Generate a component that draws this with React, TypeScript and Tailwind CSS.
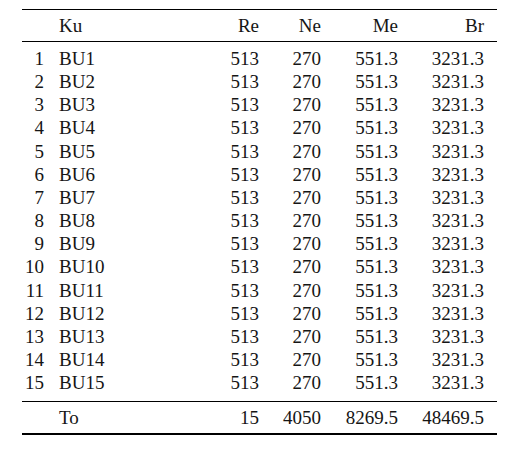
const rows = Array.from({ length: 15 }, (_, i) => ({
  idx: i + 1,
  name: `BU${i + 1}`,
  re: "513",
  ne: "270",
  me: "551.3",
  br: "3231.3",
}));

const GRID = "grid grid-cols-[22px_165px_50px_62px_77px_86px] pr-[13px]";

export default function App() {
  return (
    <div className="w-[513px] h-[450px] bg-white text-[#151515] font-['Liberation_Serif'] text-[19px]">
      <div className="ml-[22px] pt-[9px] w-[475px]">
        <div className="border-t-[1.5px] border-black" />
        <div className={`${GRID} leading-[31px]`}>
          <span />
          <span className="pl-[15px]">Ku</span>
          <span className="text-right">Re</span>
          <span className="text-right">Ne</span>
          <span className="text-right">Me</span>
          <span className="text-right">Br</span>
        </div>
        <div className="border-t border-black" />
        <div className="pt-[5px] pb-[7px]">
          {rows.map((r) => (
            <div key={r.idx} className={`${GRID} leading-[23.15px]`}>
              <span className="text-right">{r.idx}</span>
              <span className="pl-[15px]">{r.name}</span>
              <span className="text-right">{r.re}</span>
              <span className="text-right">{r.ne}</span>
              <span className="text-right">{r.me}</span>
              <span className="text-right">{r.br}</span>
            </div>
          ))}
        </div>
        <div className="border-t border-black" />
        <div className={`${GRID} leading-[31px]`}>
          <span />
          <span className="pl-[15px]">To</span>
          <span className="text-right">15</span>
          <span className="text-right">4050</span>
          <span className="text-right">8269.5</span>
          <span className="text-right">48469.5</span>
        </div>
        <div className="border-t-2 border-black" />
      </div>
    </div>
  );
}
